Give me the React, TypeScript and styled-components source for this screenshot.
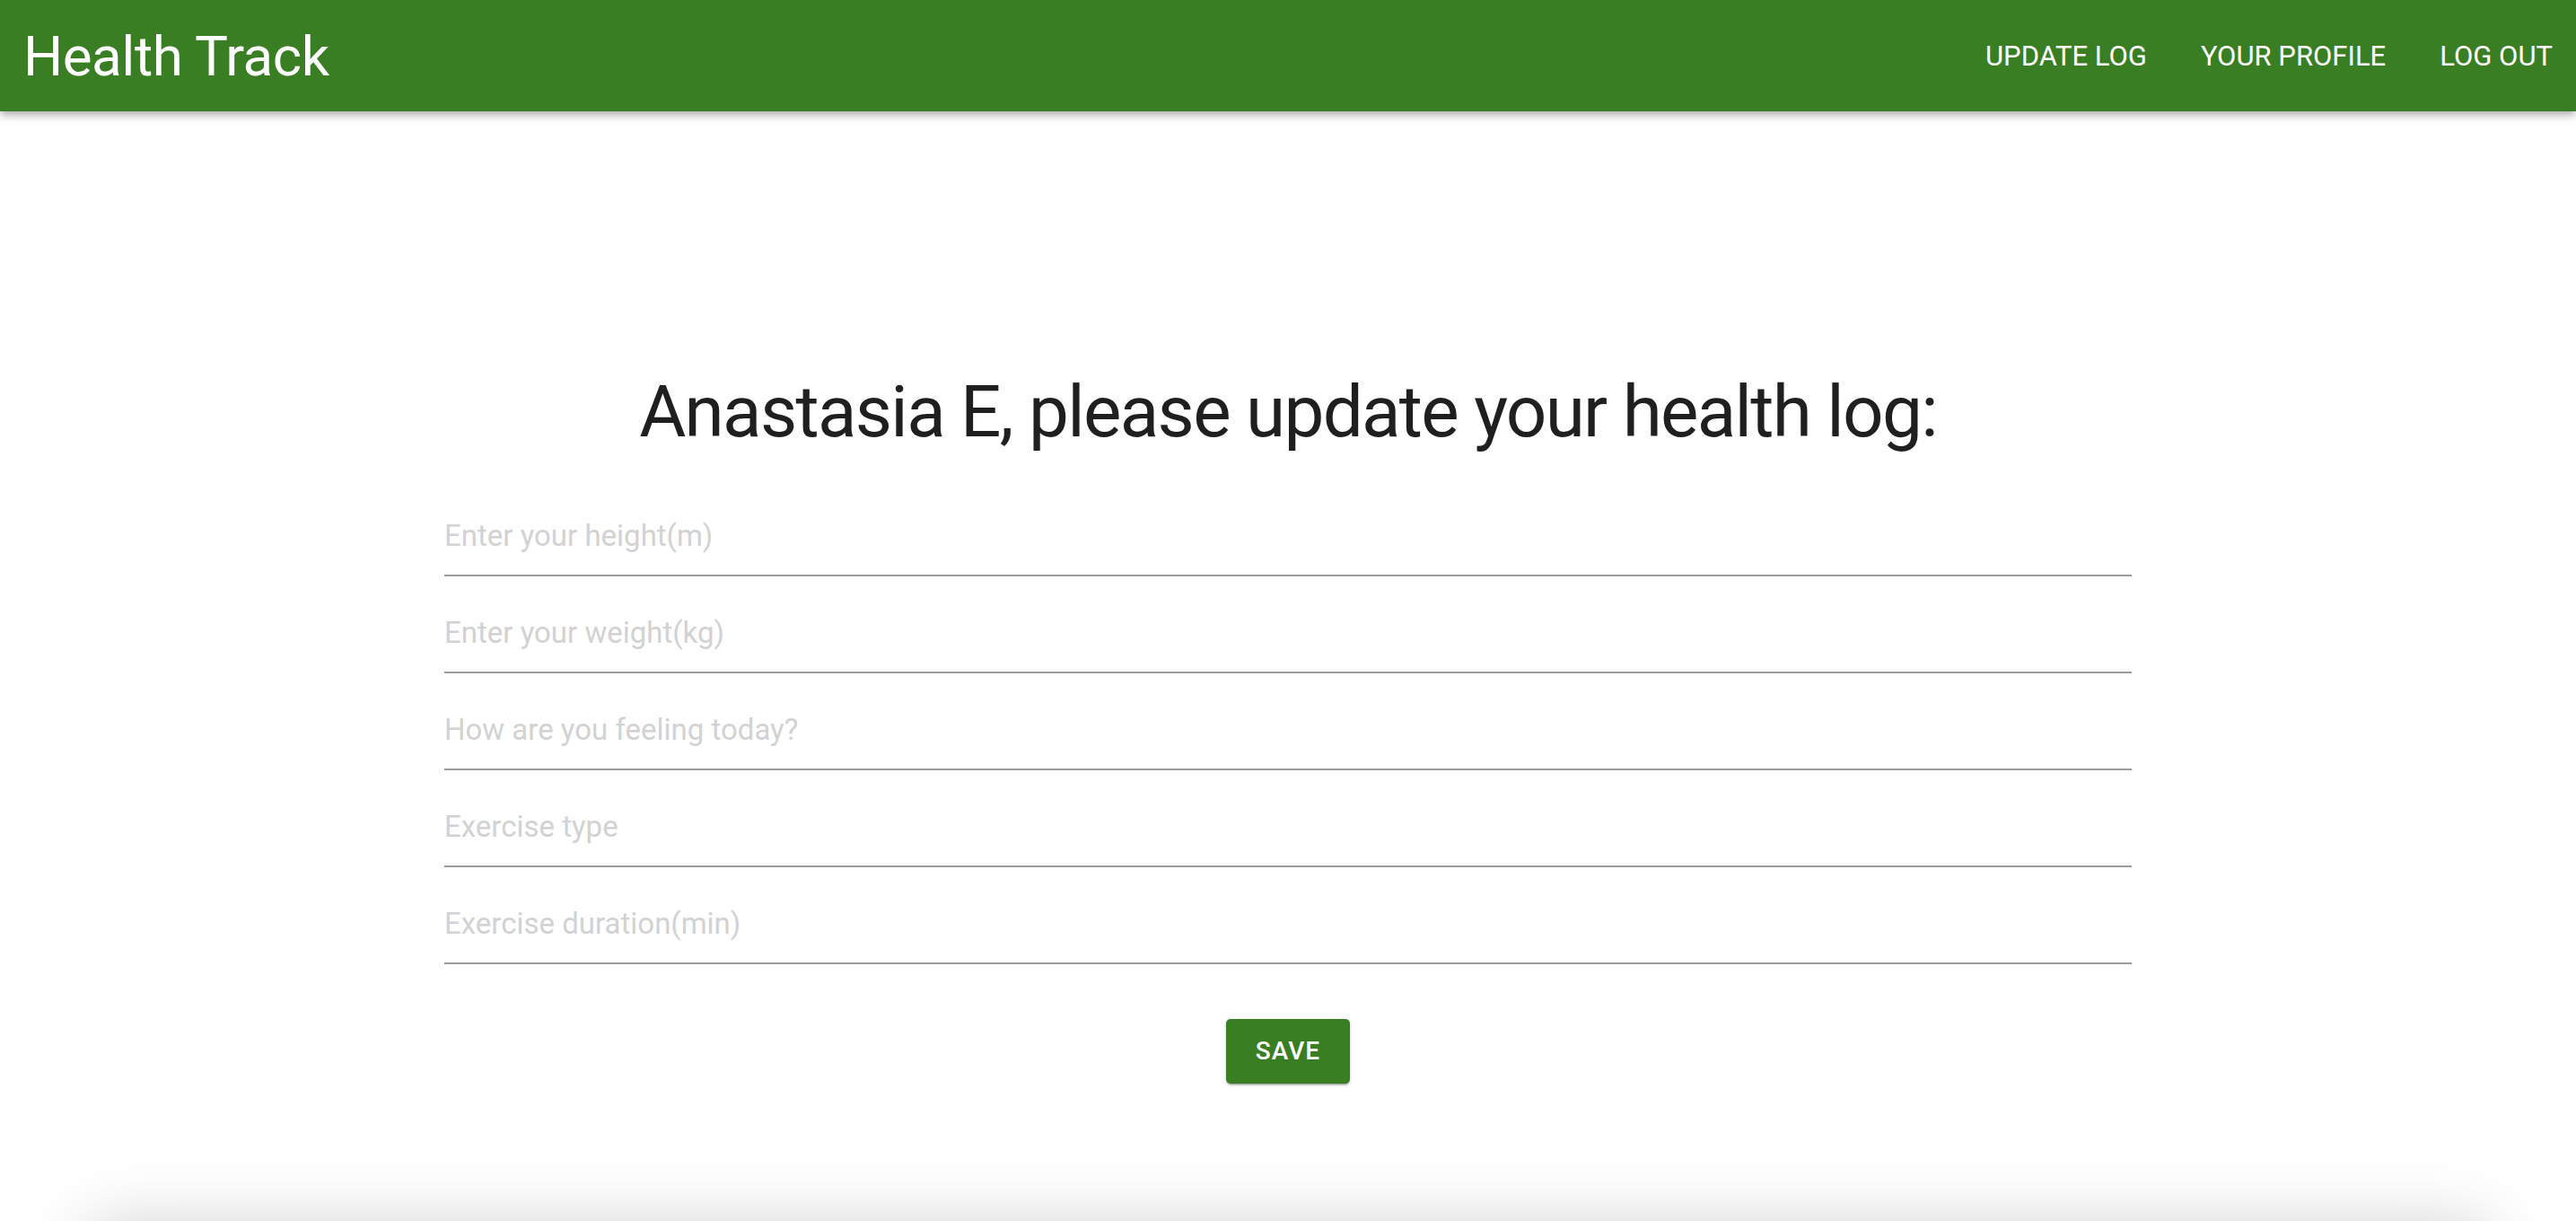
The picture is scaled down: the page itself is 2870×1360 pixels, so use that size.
import React from "react";
import styled, { createGlobalStyle } from "styled-components";

const Global = createGlobalStyle`
  html, body { margin: 0; padding: 0; background: #ffffff; }
  body { font-family: Roboto, "Liberation Sans", Arial, sans-serif; overflow: hidden; }
  * { box-sizing: border-box; }
`;

const Page = styled.div`
  min-height: 1360px;
  display: flex;
  flex-direction: column;
`;

const AppBar = styled.header`
  height: 124px;
  background: #397e23;
  color: #ffffff;
  display: flex;
  align-items: center;
  justify-content: space-between;
  padding: 0 0 0 26px;
  box-shadow: 0 4px 8px -2px rgba(0, 0, 0, 0.25), 0 6px 10px 0 rgba(0, 0, 0, 0.14);
  position: relative;
  z-index: 2;
`;

const Brand = styled.div`
  font-size: 62px;
  font-weight: 400;
  letter-spacing: -0.5px;
`;

const Nav = styled.nav`
  display: flex;
  align-items: center;
`;

const NavButton = styled.button`
  background: none;
  border: none;
  color: #ffffff;
  font-family: inherit;
  font-size: 31px;
  font-weight: 400;
  text-transform: uppercase;
  padding: 12px 26px 12px 34px;
  cursor: pointer;
`;

const Main = styled.main`
  display: flex;
  flex-direction: column;
  align-items: center;
  padding-top: 288px;
`;

const Heading = styled.h1`
  margin: 0 0 28px;
  font-size: 80px;
  line-height: 94px;
  font-weight: 400;
  color: #1f1f1f;
  letter-spacing: -1.7px;
`;

const Form = styled.form`
  width: 1880px;
  display: flex;
  flex-direction: column;
`;

const Field = styled.div`
  height: 108px;
  border-bottom: 2px solid #9b9b9b;
  padding-top: 44px;
`;

const Input = styled.input`
  width: 100%;
  border: none;
  outline: none;
  background: transparent;
  font-family: inherit;
  font-size: 33px;
  line-height: 38px;
  height: 38px;
  padding: 0;
  color: #212121;
  &::placeholder { color: #d2d2d2; }
`;

const Actions = styled.div`
  display: flex;
  justify-content: center;
  margin-top: 61px;
`;

const SaveButton = styled.button`
  background: #397e23;
  color: #ffffff;
  border: none;
  border-radius: 5px;
  font-family: inherit;
  font-size: 28px;
  font-weight: 500;
  letter-spacing: 1px;
  text-transform: uppercase;
  line-height: 48px;
  padding: 12px 33px;
  box-shadow: 0 3px 1px -2px rgba(0,0,0,0.2), 0 2px 2px 0 rgba(0,0,0,0.14), 0 1px 5px 0 rgba(0,0,0,0.12);
  cursor: pointer;
`;

const LogCard = styled.section`
  margin: 163px 100px 0;
  height: 400px;
  border-radius: 8px;
  background: #ffffff;
  box-shadow: 0 0 80px rgba(0, 0, 0, 0.22);
`;

const fields = [
  "Enter your height(m)",
  "Enter your weight(kg)",
  "How are you feeling today?",
  "Exercise type",
  "Exercise duration(min)",
];

export default function App() {
  return (
    <Page>
      <Global />
      <AppBar>
        <Brand>Health Track</Brand>
        <Nav>
          <NavButton>Update Log</NavButton>
          <NavButton>Your Profile</NavButton>
          <NavButton>Log Out</NavButton>
        </Nav>
      </AppBar>
      <Main>
        <Heading>Anastasia E, please update your health log:</Heading>
        <Form onSubmit={(e) => e.preventDefault()}>
          {fields.map((f) => (
            <Field key={f}>
              <Input placeholder={f} />
            </Field>
          ))}
          <Actions>
            <SaveButton type="submit">Save</SaveButton>
          </Actions>
        </Form>
      </Main>
      <LogCard />
    </Page>
  );
}
